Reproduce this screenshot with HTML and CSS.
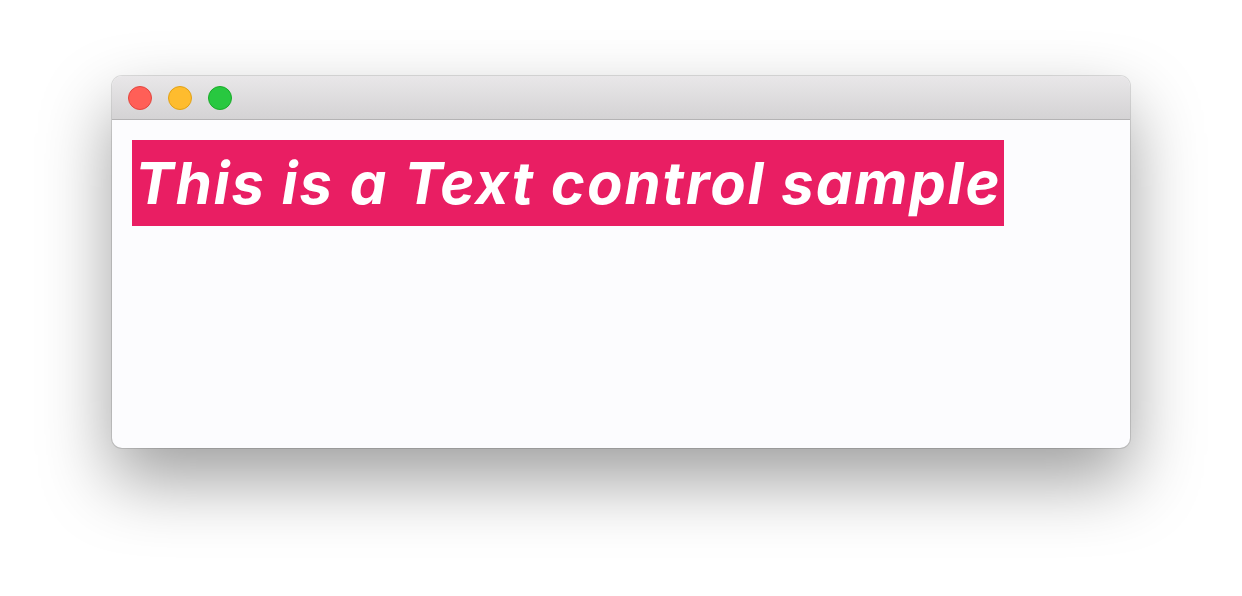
FILE: index.html
```html
<!DOCTYPE html>
<html>
<head>
<meta charset="utf-8">
<link rel="stylesheet" href="styles.css">
</head>
<body>
<div class="stage">
  <div class="window">
    <div class="titlebar">
      <span class="light red"></span>
      <span class="light yellow"></span>
      <span class="light green"></span>
    </div>
    <div class="content">
      <span class="sample">This is a Text control sample</span>
    </div>
  </div>
</div>
</body>
</html>
```
FILE: styles.css
```css
html, body {
  margin: 0;
  padding: 0;
  background: #ffffff;
}
.stage {
  width: 1242px;
  height: 596px;
  padding: 76px 0 0 112px;
  box-sizing: border-box;
}
.window {
  width: 1018px;
  height: 372px;
  border-radius: 10px;
  background: #fcfcfe;
  box-shadow: 0 0 0 1px rgba(0,0,0,0.12), 0 32px 70px rgba(0,0,0,0.38);
  overflow: hidden;
  display: flex;
  flex-direction: column;
}
.titlebar {
  height: 44px;
  box-sizing: border-box;
  background: linear-gradient(#e9e7e9, #d4d3d4);
  border-bottom: 1px solid #b4b3b4;
  display: flex;
  align-items: center;
  gap: 16px;
  padding-left: 16px;
}
.light {
  width: 24px;
  height: 24px;
  border-radius: 50%;
  box-sizing: border-box;
}
.red { background: #ff5f57; border: 1px solid #e2463f; }
.yellow { background: #febc2e; border: 1px solid #e1a116; }
.green { background: #28c840; border: 1px solid #1aab29; }
.content {
  flex: 1;
  padding: 20px 0 0 20px;
}
.sample {
  display: inline-block;
  background: #e91e63;
  color: #ffffff;
  font-family: Inter, "Noto Sans", sans-serif;
  font-weight: 700;
  font-style: italic;
  font-size: 58px;
  line-height: 86px;
  height: 86px;
  padding: 0 2px 0 3px;
  letter-spacing: 2px;
}
```
